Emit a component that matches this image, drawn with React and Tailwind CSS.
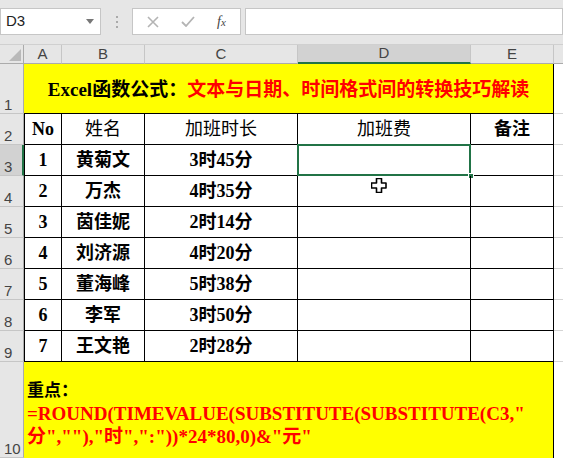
import React from 'react';

const serif = "font-['Liberation_Serif','Noto_Sans_CJK_SC',serif]";
const sans = "font-['Liberation_Sans','Noto_Sans_CJK_SC',sans-serif]";

const staff = [
  ['1', '黄菊文', '3时45分'],
  ['2', '万杰', '4时35分'],
  ['3', '茵佳妮', '2时14分'],
  ['4', '刘济源', '4时20分'],
  ['5', '董海峰', '5时38分'],
  ['6', '李军', '3时50分'],
  ['7', '王文艳', '2时28分'],
];

const RowHead = ({ n, active }) => (
  <div
    className={`flex items-end pl-[4px] pb-[1px] text-[15px] leading-none text-[#444] border-b border-[#c6c6c6] ${sans} ${
      active ? 'bg-[#d2d2d2] border-r-2 border-r-[#217346]' : 'bg-[#e6e6e6] border-r border-r-[#ababab]'
    }`}
  >
    {n}
  </div>
);

const Cell = ({ children, className = '' }) => (
  <div className={`flex items-center justify-center border-r border-b border-black text-[18px] leading-none text-black ${serif} ${className}`}>
    {children}
  </div>
);

const Spare = () => <div className="border-b border-[#d4d4d4] bg-white" />;

const PlusCursor = () => (
  <svg width="16" height="15" viewBox="0 0 16 15" className="absolute left-[73px] top-[2px]">
    <path
      d="M5.5 0.5h5v4.5h4.5v5h-4.5v4.5h-5v-4.5h-5v-5h5z"
      fill="#fff"
      stroke="#000"
      strokeWidth="1.6"
      strokeLinejoin="round"
    />
  </svg>
);

export default function App() {
  return (
    <div className="w-[563px] h-[458px] overflow-hidden bg-white">
      {/* formula bar */}
      <div className="h-[45px] bg-[#e6e6e6] flex items-start pt-[8px] border-b border-[#d0d0d0]">
        <div className={`w-[101px] h-[27px] bg-white border border-[#c6c6c6] flex items-center justify-between pl-[5px] pr-[6px] text-[15px] text-[#222] ${sans}`}>
          <span>D3</span>
          <svg width="8" height="5" viewBox="0 0 8 5">
            <path d="M0 0h8L4 5z" fill="#777" />
          </svg>
        </div>
        <div className="w-[31px] h-[27px] flex flex-col items-center justify-center gap-[3px]">
          <span className="w-[2px] h-[2px] bg-[#aaa]" />
          <span className="w-[2px] h-[2px] bg-[#aaa]" />
          <span className="w-[2px] h-[2px] bg-[#aaa]" />
        </div>
        <div className="w-[109px] h-[27px] bg-white border border-[#c6c6c6] flex items-center pl-[14px] gap-[22px]">
          <svg width="12" height="12" viewBox="0 0 12 12">
            <path d="M1 1l10 10M11 1L1 11" stroke="#b4b4b4" strokeWidth="1.6" />
          </svg>
          <svg width="14" height="11" viewBox="0 0 14 11">
            <path d="M1 6l4 4L13 1" stroke="#b4b4b4" strokeWidth="1.8" fill="none" />
          </svg>
          <span className="font-['Liberation_Serif',serif] italic text-[14px] text-[#444] leading-none">
            f<span className="text-[11px]">x</span>
          </span>
        </div>
        <div className="ml-[4px] flex-1 h-[27px] bg-white border border-[#c6c6c6]" />
      </div>

      {/* sheet */}
      <div className="grid grid-cols-[24px_38px_83px_153px_173px_83px_1fr] grid-rows-[19px_50px_repeat(8,31px)_1fr] h-[413px]">
        {/* column headers */}
        <div className="bg-[#e6e6e6] border-r border-b border-[#ababab] relative">
          <svg width="12" height="12" viewBox="0 0 12 12" className="absolute right-[2px] bottom-[2px]">
            <path d="M12 0v12H0z" fill="#b9b9b9" />
          </svg>
        </div>
        {['A', 'B', 'C', 'D', 'E'].map((c) => (
          <div
            key={c}
            className={`flex items-center justify-center text-[15px] text-[#444] border-r border-[#c6c6c6] ${sans} ${
              c === 'D' ? 'bg-[#d2d2d2] border-b-2 border-b-[#217346]' : 'bg-[#e6e6e6] border-b border-b-[#ababab]'
            }`}
          >
            {c}
          </div>
        ))}
        <div className="bg-[#e6e6e6] border-b border-[#ababab]" />

        {/* row 1: title */}
        <RowHead n="1" />
        <div className={`col-span-5 bg-[#ffff00] border-b border-r border-black flex items-center justify-center pt-[3px] text-[19px] font-bold ${serif}`}>
          <span className="text-black">Excel函数公式：</span>
          <span className="text-[#ff0000]">文本与日期、时间格式间的转换技巧解读</span>
        </div>
        <Spare />

        {/* row 2: headings */}
        <RowHead n="2" />
        <Cell className="border-l font-bold">No</Cell>
        <Cell>姓名</Cell>
        <Cell>加班时长</Cell>
        <Cell>加班费</Cell>
        <Cell className="font-bold">备注</Cell>
        <Spare />

        {staff.map(([no, name, dur], i) => (
          <React.Fragment key={no}>
            <RowHead n={String(i + 3)} active={i === 0} />
            <Cell className="border-l font-bold">{no}</Cell>
            <Cell className="font-bold">{name}</Cell>
            <Cell className="font-bold text-[17px]">{dur}</Cell>
            <Cell className="relative">
              {i === 0 && (
                <>
                  <div className="absolute left-[-1px] top-[-1px] right-[-1px] bottom-[-1px] border-2 border-[#217346]" />
                  <div className="absolute right-[-4px] bottom-[-4px] w-[6px] h-[6px] bg-[#217346] border border-white" />
                </>
              )}
              {i === 1 && <PlusCursor />}
            </Cell>
            <Cell />
            <Spare />
          </React.Fragment>
        ))}

        {/* row 10: formula note */}
        <RowHead n="10" />
        <div className={`col-span-5 bg-[#ffff00] border-r border-black pl-[3px] pt-[17px] text-[19px] leading-[23px] font-bold ${serif}`}>
          <div className="text-black text-[17px]">重点：</div>
          <div className="text-[#ff0000]">
            =ROUND(TIMEVALUE(SUBSTITUTE(SUBSTITUTE(C3,"
            <br />
            分",""),"时",":"))*24*80,0)&amp;"元"
          </div>
        </div>
        <div className="bg-white" />
      </div>
    </div>
  );
}
